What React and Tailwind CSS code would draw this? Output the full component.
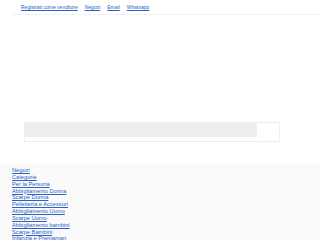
const TOP = ["Registrati come venditore", "Negozi", "Email", "Whatsapp"];
const FOOT = [
  "Negozi",
  "Categorie",
  "Per la Persona",
  "Abbigliamento Donna",
  "Scarpe Donna",
  "Pelletteria e Accessori",
  "Abbigliamento Uomo",
  "Scarpe Uomo",
  "Abbigliamento bambini",
  "Scarpe Bambini",
  "Infanzia e Premaman",
];

export default function App() {
  return (
    <div className="w-[320px] h-[240px] overflow-hidden bg-white font-['Liberation_Sans',Arial,sans-serif]">
      <div className="ml-[12px] border-b border-[#f2f2f2] h-[15px] pl-[9px] pt-[4px] flex gap-[7px] text-[5px] leading-[6px]">
        {TOP.map((t) => (
          <a key={t} href="#" className="text-[#2a62c9] underline">
            {t}
          </a>
        ))}
      </div>

      <div className="h-[107px]" />

      <div className="ml-[24px] w-[256px] h-[20px] border border-[#eeeeee]">
        <div className="w-[232px] h-[14px] bg-[#eeeeee]" />
      </div>

      <div className="h-[22px]" />

      <div className="bg-[#fafafa] h-[80px] pl-[12px] pt-[3px] text-[5.7px] leading-[6.85px]">
        {FOOT.map((t) => (
          <div key={t}>
            <a href="#" className="text-[#2a62c9] underline">
              {t}
            </a>
          </div>
        ))}
      </div>
    </div>
  );
}
